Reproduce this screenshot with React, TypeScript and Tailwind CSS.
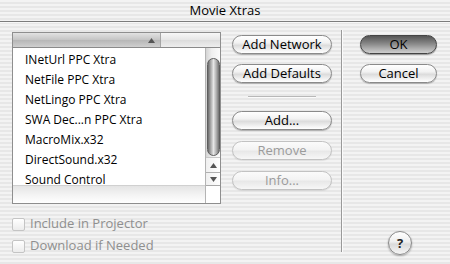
import React from 'react';

const items = [
  'INetUrl PPC Xtra',
  'NetFile PPC Xtra',
  'NetLingo PPC Xtra',
  'SWA Dec...n PPC Xtra',
  'MacroMix.x32',
  'DirectSound.x32',
  'Sound Control',
];

const stripes =
  'bg-[repeating-linear-gradient(to_bottom,#f3f3f3_0px,#f3f3f3_2px,#e7e7e7_2px,#e7e7e7_4px)]';

const AquaButton: React.FC<{ label: string; disabled?: boolean; primary?: boolean; className?: string }> = ({
  label,
  disabled,
  primary,
  className = '',
}) => {
  let look =
    'border-[#8a8a8a] text-black bg-[linear-gradient(to_bottom,#ffffff_0%,#f2f2f2_40%,#dcdcdc_55%,#f4f4f4_85%,#ffffff_100%)] shadow-[0_1px_1px_rgba(0,0,0,0.25)]';
  if (disabled)
    look =
      'border-[#c2c2c2] text-[#9b9b9b] bg-[linear-gradient(to_bottom,#fbfbfb_0%,#f3f3f3_45%,#e8e8e8_55%,#f7f7f7_100%)] shadow-[0_1px_1px_rgba(0,0,0,0.08)]';
  if (primary)
    look =
      'border-[#444444] text-black bg-[linear-gradient(to_bottom,#555555_0%,#7c7c7c_35%,#8e8e8e_50%,#b0b0b0_75%,#cfcfcf_100%)] shadow-[0_1px_1px_rgba(0,0,0,0.35)]';
  return (
    <div
      className={`h-[19px] rounded-full border flex items-center justify-center text-[13px] leading-none ${look} ${className}`}
    >
      {label}
    </div>
  );
};

const Check: React.FC<{ label: string; className?: string }> = ({ label, className = '' }) => (
  <div className={`flex items-center h-[20px] ${className}`}>
    <div className="w-[13px] h-[13px] rounded-[2px] border border-[#c4c4c4] bg-[linear-gradient(to_bottom,#ffffff,#ececec)]" />
    <span className="ml-[5px] text-[13px] text-[#8f8f8f]">{label}</span>
  </div>
);

const Tri: React.FC<{ down?: boolean }> = ({ down }) => (
  <svg width="7" height="5" viewBox="0 0 7 5">
    <path d={down ? 'M0 0 L7 0 L3.5 5 Z' : 'M0 5 L7 5 L3.5 0 Z'} fill="#555" />
  </svg>
);

export default function App() {
  return (
    <div className={`w-[450px] h-[264px] overflow-hidden font-['Open_Sans',sans-serif] ${stripes}`}>
      {/* Title bar */}
      <div className={`h-[22px] rounded-t-[6px] border-b border-[#7d7d7d] flex items-center justify-center ${stripes}`}>
        <span className="text-[13px] text-black">Movie Xtras</span>
      </div>
      <div className="h-px bg-[#f8f8f8]" />

      <div className="flex items-start">
        {/* Left: list and checkboxes */}
        <div className="ml-[12px] mt-[9px] w-[209px]">
          <div className="h-[172px] border border-[#8e8e8e] bg-white flex flex-col overflow-hidden">
            {/* Column header */}
            <div className="h-[15px] shrink-0 flex border-b border-[#8a8a8a]">
              <div className="w-[148px] flex items-center justify-end pr-[5px] border-r border-[#a5a5a5] bg-[linear-gradient(to_bottom,#e2e2e2,#c4c4c4_50%,#b6b6b6_51%,#cfcfcf)]">
                <Tri />
              </div>
              <div className="flex-1 bg-[linear-gradient(to_bottom,#f7f7f7,#e6e6e6_50%,#dcdcdc_51%,#eeeeee)]" />
            </div>
            <div className="flex h-[155px]">
              {/* Rows */}
              <div className="flex-1 flex flex-col">
                <div className="h-[137px] pt-[2px]">
                  {items.map((t) => (
                    <div key={t} className="h-[20px] flex items-center pl-[12px] text-[12px] text-black">
                      {t}
                    </div>
                  ))}
                </div>
                <div className="relative h-[18px] border-t border-[#d0d0d0] bg-[linear-gradient(to_bottom,#e4e4e4,#f3f3f3_50%,#ffffff)]" />
              </div>
              {/* Scrollbar */}
              <div className="w-[15px] flex flex-col border-l border-[#b4b4b4]">
                <div className="h-[137px] flex flex-col bg-[linear-gradient(to_right,#d4d4d4,#efefef_40%,#fbfbfb)]">
                  <div className="h-[10px]" />
                  <div className="mx-auto w-[13px] h-[98px] rounded-full border border-[#5e5e5e] bg-[linear-gradient(to_right,#6a6a6a,#a8a8a8_25%,#e6e6e6_50%,#b0b0b0_75%,#707070)]" />
                  <div className="flex-1" />
                  <div className="h-[15px] flex items-center justify-center border-t border-[#c8c8c8] bg-[linear-gradient(to_right,#f0f0f0,#ffffff)]">
                    <Tri />
                  </div>
                  <div className="h-[13px] flex items-center justify-center border-t border-[#b0b0b0] bg-[linear-gradient(to_right,#f0f0f0,#ffffff)]">
                    <Tri down />
                  </div>
                </div>
                <div className="h-[18px] border-t border-[#a8a8a8] bg-white" />
              </div>
            </div>
          </div>
          <Check label="Include in Projector" className="mt-[10px]" />
          <Check label="Download if Needed" className="mt-[2px]" />
        </div>

        {/* Middle buttons */}
        <div className="ml-[11px] mt-[12px] w-[100px] flex flex-col">
          <AquaButton label="Add Network" />
          <AquaButton label="Add Defaults" className="mt-[10px]" />
          <div className="mt-[13px] mx-[16px] h-px bg-[#b8b8b8]" />
          <div className="mx-[16px] h-px bg-[#fbfbfb]" />
          <AquaButton label="Add..." className="mt-[13px]" />
          <AquaButton label="Remove" disabled className="mt-[11px]" />
          <AquaButton label="Info..." disabled className="mt-[11px]" />
        </div>

        {/* Divider */}
        <div className="ml-[9px] mt-[7px] h-[222px] w-px bg-[#9a9a9a]" />
        <div className="mt-[7px] h-[222px] w-px bg-[#fbfbfb]" />

        {/* Right buttons */}
        <div className="ml-[17px] mt-[12px] w-[77px] flex flex-col">
          <AquaButton label="OK" primary />
          <AquaButton label="Cancel" className="mt-[10px]" />
          <div className="mt-[148px] ml-[28px] w-[24px] h-[24px] rounded-full border border-[#8a8a8a] flex items-center justify-center bg-[linear-gradient(to_bottom,#ffffff,#eeeeee_45%,#dadada_55%,#f6f6f6)] shadow-[0_1px_2px_rgba(0,0,0,0.3)]">
            <span className="text-[13px] font-bold leading-none text-[#222]">?</span>
          </div>
        </div>
      </div>
    </div>
  );
}
